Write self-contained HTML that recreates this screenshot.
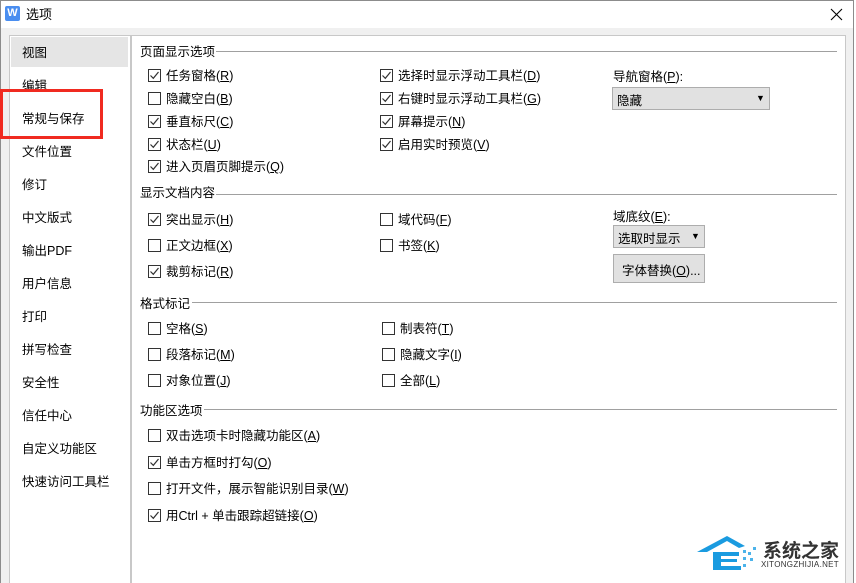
<!DOCTYPE html>
<html><head><meta charset="utf-8"><style>
*{margin:0;padding:0;box-sizing:border-box}
body{width:856px;height:583px;overflow:hidden;background:#fff;font-family:"Liberation Sans","Noto Sans CJK SC",sans-serif;font-size:12.5px;color:#000;position:relative}
.a{position:absolute;white-space:nowrap}
.cb{position:absolute;width:13px;height:13px;border:1px solid #333;background:#fff}
.cb svg{position:absolute;left:0px;top:0px}
.hl{position:absolute;height:1px;background:#a0a0a0}
.it{position:absolute;left:22px;font-size:12.5px}
u{text-decoration:underline}
</style></head><body>
<div class="a" style="left:0;top:0;width:854px;height:583px;border:1px solid #8c8c8c;border-bottom:none;background:#f0f0f0"></div>
<div class="a" style="left:1px;top:1px;width:852px;height:27px;background:#fff"></div>
<div class="a" style="left:5px;top:6px;width:15px;height:15px;background:#4a8ef0;border-radius:2px;color:#fff;font-size:11px;text-align:center;line-height:15px;font-weight:bold">W</div>
<div class="a" style="left:26px;top:4px;font-size:13px">选项</div>
<svg class="a" style="left:830px;top:8px" width="13" height="13" viewBox="0 0 13 13"><path d="M1 1L12 12M12 1L1 12" stroke="#000" stroke-width="1.1"/></svg>
<!-- left list -->
<div class="a" style="left:9px;top:35px;width:122px;height:548px;background:#fff;border:1px solid #c8c8c8;border-bottom:none"></div>
<div class="a" style="left:11px;top:37px;width:117px;height:30px;background:#e5e5e5"></div>
<div class="it a" style="top:42px">视图</div>
<div class="it a" style="top:75px">编辑</div>
<div class="it a" style="top:108px">常规与保存</div>
<div class="it a" style="top:141px">文件位置</div>
<div class="it a" style="top:174px">修订</div>
<div class="it a" style="top:207px">中文版式</div>
<div class="it a" style="top:240px">输出PDF</div>
<div class="it a" style="top:273px">用户信息</div>
<div class="it a" style="top:306px">打印</div>
<div class="it a" style="top:339px">拼写检查</div>
<div class="it a" style="top:372px">安全性</div>
<div class="it a" style="top:405px">信任中心</div>
<div class="it a" style="top:438px">自定义功能区</div>
<div class="it a" style="top:471px">快速访问工具栏</div>
<div class="a" style="left:0;top:89px;width:103px;height:50px;border:3px solid #f02a20"></div>
<!-- right panel -->
<div class="a" style="left:131px;top:35px;width:715px;height:548px;background:#fff;border:1px solid #c8c8c8;border-bottom:none"></div>
<div class="a" style="left:140px;top:41px">页面显示选项</div><div class="hl" style="left:216px;top:51px;width:621px"></div>
<div class="a" style="left:140px;top:182px">显示文档内容</div><div class="hl" style="left:216px;top:194px;width:621px"></div>
<div class="a" style="left:140px;top:293px">格式标记</div><div class="hl" style="left:192px;top:302px;width:645px"></div>
<div class="a" style="left:140px;top:400px">功能区选项</div><div class="hl" style="left:204px;top:409px;width:633px"></div>

<div id="cbs"></div>
<div class="a" style="left:613px;top:66px">导航窗格(<u>P</u>):</div>
<div class="a" style="left:612px;top:87px;width:158px;height:23px;background:#e1e1e1;border:1px solid #adadad;padding:2px 0 0 4px">隐藏<span class="a" style="left:143px;top:5px;font-size:9px">▼</span></div>
<div class="a" style="left:613px;top:206px">域底纹(<u>E</u>):</div>
<div class="a" style="left:613px;top:225px;width:92px;height:23px;background:#e1e1e1;border:1px solid #adadad;padding:2px 0 0 4px">选取时显示<span class="a" style="left:77px;top:5px;font-size:9px">▼</span></div>
<div class="a" style="left:613px;top:254px;width:92px;height:29px;background:#e1e1e1;border:1px solid #adadad;padding:5px 0 0 8px">字体替换(<u>O</u>)...</div>
<!-- logo -->
<svg class="a" style="left:695px;top:530px" width="70" height="46" viewBox="0 0 70 46">
<path d="M2 22 L32 6 L50 16 L44 18 L32 11 L12 22 Z" fill="#1a9be0"/>
<rect x="18" y="22" width="4" height="18" fill="#1a9be0"/>
<path d="M22 22 H44 V26 H26 V29 H42 V32 H26 V36 H46 V40 H22Z" fill="#1a9be0"/>
<g fill="#4cb3ea"><rect x="48" y="20" width="3" height="3"/><rect x="53" y="22" width="3" height="3"/><rect x="48" y="27" width="3" height="3"/><rect x="55" y="28" width="3" height="3"/><rect x="48" y="34" width="3" height="3"/><rect x="58" y="17" width="3" height="3"/></g>
</svg>
<div class="a" style="left:763px;top:536px;font-size:19px;font-weight:bold;color:#333">系统之家</div>
<div class="a" style="left:761px;top:560px;font-size:8px;color:#333;letter-spacing:0.3px">XITONGZHIJIA.NET</div>
<script>
var ck='<svg width="11" height="11" viewBox="0 0 11 11"><path d="M1.5 5.5 L4.3 8.3 L9.5 2" stroke="#333" stroke-width="1.2" fill="none"/></svg>';
var d=[
[148,75,1,'任务窗格(<u>R</u>)'],[148,98,0,'隐藏空白(<u>B</u>)'],[148,121,1,'垂直标尺(<u>C</u>)'],[148,144,1,'状态栏(<u>U</u>)'],[148,166,1,'进入页眉页脚提示(<u>Q</u>)'],
[380,75,1,'选择时显示浮动工具栏(<u>D</u>)'],[380,98,1,'右键时显示浮动工具栏(<u>G</u>)'],[380,121,1,'屏幕提示(<u>N</u>)'],[380,144,1,'启用实时预览(<u>V</u>)'],
[148,219,1,'突出显示(<u>H</u>)'],[148,245,0,'正文边框(<u>X</u>)'],[148,271,1,'裁剪标记(<u>R</u>)'],
[380,219,0,'域代码(<u>F</u>)'],[380,245,0,'书签(<u>K</u>)'],
[148,328,0,'空格(<u>S</u>)'],[148,354,0,'段落标记(<u>M</u>)'],[148,380,0,'对象位置(<u>J</u>)'],
[382,328,0,'制表符(<u>T</u>)'],[382,354,0,'隐藏文字(<u>I</u>)'],[382,380,0,'全部(<u>L</u>)'],
[148,435,0,'双击选项卡时隐藏功能区(<u>A</u>)'],[148,462,1,'单击方框时打勾(<u>O</u>)'],[148,488,0,'打开文件，展示智能识别目录(<u>W</u>)'],[148,515,1,'用Ctrl + 单击跟踪超链接(<u>O</u>)']];
var h='';d.forEach(function(r){h+='<div class="cb" style="left:'+r[0]+'px;top:'+(r[1]-6)+'px">'+(r[2]?ck:'')+'</div><div class="a" style="left:'+(r[0]+18)+'px;top:'+(r[1]-10)+'px">'+r[3]+'</div>';});
document.getElementById('cbs').innerHTML=h;
</script>
</body></html>
